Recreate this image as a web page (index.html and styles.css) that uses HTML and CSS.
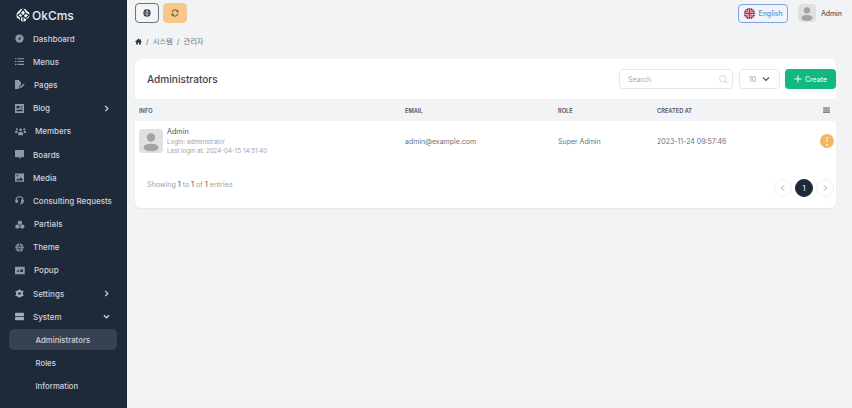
FILE: index.html
```html
<!DOCTYPE html>
<html lang="en">
<head>
<meta charset="utf-8">
<title>Administrators</title>
<link rel="stylesheet" href="styles.css">
</head>
<body>
<div class="app">
<aside class="sidebar">
  <div class="brand">
    <svg class="logo" viewBox="0 0 16 16"><path fill="#fff" d="M8 .5 11 1.500 12.500 3.500 15 5 15.500 8 14.500 11 12 12.500 10.500 15 7.500 15.500 5 14.500 3.500 12.500 1 11 .5 8 1.500 5 3.500 3.500 5 1.500Z"/><path stroke="#1e2939" stroke-width="1.300" fill="none" d="M8 1 5 6 8 9 11 6ZM5 6 2 8 5 11 8 9M8 9 8 15M11 6 15 8 11 12 8 9M5 11 5 15"/></svg>
    <span>OkCms</span>
  </div>
  <nav class="menu">
    <a class="item"><span class="ico w12"><svg viewBox="0 0 12 12"><circle cx="6" cy="6" r="5.500" fill="#8f98a5"/><path d="M8.500 2.800 6.800 7 5 6Z" fill="#1e2939"/><circle cx="5.700" cy="6.700" r="1.200" fill="#1e2939"/></svg></span><span class="lbl">Dashboard</span></a>
    <a class="item"><span class="ico w12"><svg viewBox="0 0 12 12" fill="#8f98a5"><path d="M0 1.500h2v1.400H0zM3.500 1.500H12v1.400H3.500zM0 5.300h2v1.400H0zM3.500 5.300H12v1.400H3.500zM0 9.100h2v1.400H0zM3.500 9.100H12v1.400H3.500z"/></svg></span><span class="lbl">Menus</span></a>
    <a class="item"><span class="ico w13"><svg viewBox="0 0 13 12" fill="#8f98a5"><path d="M0 0h5l3 3v2.500L5.500 9 5 12H0z"/><path d="M6.500 9 11.500 5 13 6.300 8 10.500 6 11z"/></svg></span><span class="lbl">Pages</span></a>
    <a class="item"><span class="ico w12"><svg viewBox="0 0 12 12" fill="#8f98a5"><path fill-rule="evenodd" d="M0 0h12v12H0zM2 2.500v3h4v-3zM7.500 2.500v1h2.500v-1zM7.500 5v1h2.500V5zM2 7.500V9.500h8V7.500z"/></svg></span><span class="lbl">Blog</span><svg class="chev" viewBox="0 0 8 8"><path d="M2.500 1 5.500 4 2.500 7" fill="none" stroke="#cbd2db" stroke-width="1.500"/></svg></a>
    <a class="item"><span class="ico w15"><svg viewBox="0 0 15 12" fill="#8f98a5"><circle cx="7.500" cy="3.800" r="1.900"/><circle cx="2.600" cy="3" r="1.400"/><circle cx="12.400" cy="3" r="1.400"/><path d="M4.300 11V8.500Q4.300 6.500 6 6.500H9Q10.700 6.500 10.700 8.500V11zM0 8V6.500Q0 5 1.500 5H3.500L3.300 8zM15 8V6.500Q15 5 13.500 5H11.500L11.700 8z"/></svg></span><span class="lbl">Members</span></a>
    <a class="item"><span class="ico w12"><svg viewBox="0 0 12 12" fill="#8f98a5"><path d="M1 0h10q1 0 1 1v7.500q0 1-1 1H8L5.500 12V9.500H1q-1 0-1-1V1q0-1 1-1z"/></svg></span><span class="lbl">Boards</span></a>
    <a class="item"><span class="ico w12"><svg viewBox="0 0 12 12" fill="#8f98a5"><path fill-rule="evenodd" d="M0 .5h12v11H0zM1.500 10h9L8 5.500 5.500 8.500 4 7z"/><circle cx="3.200" cy="3.400" r="1.100" fill="#1e2939"/></svg></span><span class="lbl">Media</span></a>
    <a class="item"><span class="ico w12"><svg viewBox="0 0 12 12" fill="none" stroke="#8f98a5" stroke-width="1.500"><path d="M1.500 7V5.500a4.500 4.500 0 0 1 9 0V7q0 3-3.500 3.500"/><rect x=".5" y="4.500" width="3.500" height="4.500" rx="1" fill="#8f98a5" stroke="none"/><rect x="8" y="4.500" width="3.500" height="4.500" rx="1" fill="#8f98a5" stroke="none"/></svg></span><span class="lbl">Consulting Requests</span></a>
    <a class="item"><span class="ico w13"><svg viewBox="0 0 13 12" fill="#8f98a5"><path d="M6.500.5 9.300 2v3L6.500 6.500 3.700 5V2zM3.300 5.700 6 7.200v3L3.300 11.700.5 10.200v-3zM9.700 5.700 12.500 7.200v3L9.700 11.700 7 10.200v-3z"/></svg></span><span class="lbl">Partials</span></a>
    <a class="item"><span class="ico w12"><svg viewBox="0 0 12 12"><circle cx="6" cy="6" r="5.500" fill="#8f98a5"/><path d="M.5 4.200h11M.5 7.800h11M6 .5Q3 6 6 11.500Q9 6 6 .5" fill="none" stroke="#1e2939" stroke-width=".8"/></svg></span><span class="lbl">Theme</span></a>
    <a class="item"><span class="ico w13"><svg viewBox="0 0 13 12" fill="#8f98a5"><path fill-rule="evenodd" d="M0 1h13v10H0zM2.500 8 4 4.500 5.500 8zM7 4.500V8h3.500V4.500z"/></svg></span><span class="lbl">Popup</span></a>
    <a class="item"><span class="ico w12"><svg viewBox="0 0 12 12"><circle cx="6" cy="6" r="3.500" fill="none" stroke="#a5adb9" stroke-width="2.400"/><path d="M6 .5v11M.7 3l10.600 6M.7 9l10.600-6" stroke="#a5adb9" stroke-width="1.800"/><circle cx="6" cy="6" r="1.700" fill="#1e2939"/></svg></span><span class="lbl">Settings</span><svg class="chev" viewBox="0 0 8 8"><path d="M2.500 1 5.500 4 2.500 7" fill="none" stroke="#cbd2db" stroke-width="1.500"/></svg></a>
    <a class="item"><span class="ico w12"><svg viewBox="0 0 12 12" fill="#a5adb9"><rect y="1" width="12" height="4.500" rx="1"/><rect y="6.500" width="12" height="4.500" rx="1"/></svg></span><span class="lbl">System</span><svg class="chev" viewBox="0 0 8 8"><path d="M1 2.500 4 5.500 7 2.500" fill="none" stroke="#cbd2db" stroke-width="1.500"/></svg></a>
    <a class="sub active">Administrators</a>
    <a class="sub">Roles</a>
    <a class="sub">Information</a>
  </nav>
</aside>
<div class="main">
  <header class="topbar">
    <div class="tools">
      <button class="tool outline"><svg viewBox="0 0 12 12"><circle cx="6" cy="6" r="5.500" fill="#1e2939"/><path d="M.5 4.300h11M.5 7.700h11M6 .5Q3.500 6 6 11.500Q8.500 6 6 .5" fill="none" stroke="#fff" stroke-width=".7"/></svg></button>
      <button class="tool orange"><svg viewBox="0 0 12 12" fill="none" stroke="#4a4032" stroke-width="1.400"><path d="M1.500 5a4.500 4.500 0 0 1 8-2l1 1M10.500 7a4.500 4.500 0 0 1-8 2l-1-1"/><path d="M10.500 1V4.500H7.500M1.500 11V7.500H4.500" stroke-width="1"/></svg></button>
    </div>
    <div class="account">
      <button class="lang">
        <svg class="flag" viewBox="0 0 14 14"><clipPath id="fc"><circle cx="7" cy="7" r="7"/></clipPath><g clip-path="url(#fc)"><rect width="14" height="14" fill="#27408b"/><path d="M0 0 14 14M14 0 0 14" stroke="#d9dce8" stroke-width="2"/><path d="M0 0 14 14M14 0 0 14" stroke="#d1344a" stroke-width="1"/><path d="M7 0V14M0 7H14" stroke="#e8e9ee" stroke-width="3.500"/><path d="M7 0V14M0 7H14" stroke="#cf2a44" stroke-width="2.200"/></g></svg>
        <span>English</span>
      </button>
      <span class="avatar small"><svg viewBox="0 0 24 24" fill="#a3a3a3"><circle cx="12" cy="8.500" r="4.200"/><ellipse cx="12" cy="18.500" rx="7.500" ry="3.800"/></svg></span>
      <span class="account-name">Admin</span>
    </div>
  </header>
  <div class="crumbs">
    <svg class="home" viewBox="0 0 12 12" fill="#2d3748"><path d="M6 1 0 6.300l.7.8L2 6v5h3V8h2v3h3V6l1.300 1.100.7-.8L10 4.600V2H8.500v1.300z"/></svg>
    <span class="sep">/</span><span>시스템</span><span class="sep">/</span><span>관리자</span>
  </div>
  <section class="card">
    <div class="card-head">
      <h1>Administrators</h1>
      <div class="controls">
        <label class="search"><span>Search</span><svg viewBox="0 0 12 12" fill="none" stroke="#c9cdd3"><circle cx="5" cy="5" r="4.200"/><path d="M8 8l3 3" stroke-width="1.300"/></svg></label>
        <div class="size"><span>10</span><svg viewBox="0 0 8 8"><path d="M1 2.500 4 5.500 7 2.500" fill="none" stroke="#4b5563" stroke-width="1.200"/></svg></div>
        <button class="create"><svg viewBox="0 0 10 10"><path d="M5 .5v9M.5 5h9" stroke="#fff" stroke-width="1.200"/></svg>Create</button>
      </div>
    </div>
    <div class="row thead">
      <div class="c-info">INFO</div><div class="c-email">EMAIL</div><div class="c-role">ROLE</div><div class="c-date">CREATED AT</div>
      <div class="c-act"><svg class="bars" viewBox="0 0 9 8" fill="#4b5563"><path d="M0 .5h9v1.400H0zM0 3.300h9v1.400H0zM0 6.100h9v1.400H0z"/></svg></div>
    </div>
    <div class="row tbody">
      <div class="c-info user">
        <span class="avatar"><svg viewBox="0 0 24 24" fill="#a3a3a3"><circle cx="12" cy="8.500" r="4.200"/><ellipse cx="12" cy="18.500" rx="7.500" ry="3.800"/></svg></span>
        <div class="meta"><div class="name">Admin</div><div class="fine">Login: administrator</div><div class="fine">Last login at: 2024-04-15 14:51:40</div></div>
      </div>
      <div class="c-email">admin@example.com</div>
      <div class="c-role">Super Admin</div>
      <div class="c-date">2023-11-24 09:57:46</div>
      <div class="c-act"><span class="dots"><i></i><i></i><i></i></span></div>
    </div>
    <div class="card-foot">
      <div class="entries">Showing <b>1</b> to <b>1</b> of <b>1</b> entries</div>
      <div class="pager">
        <span class="pg"><svg viewBox="0 0 8 8"><path d="M5 1.500 2.500 4 5 6.500" fill="none" stroke="#9ca3af"/></svg></span>
        <span class="pg current">1</span>
        <span class="pg"><svg viewBox="0 0 8 8"><path d="M3 1.500 5.500 4 3 6.500" fill="none" stroke="#9ca3af"/></svg></span>
      </div>
    </div>
  </section>
</div>
</div>
</body>
</html>
```
FILE: styles.css
```css
* { box-sizing: border-box; }
html, body { margin: 0; height: 100%; }
body { font-family: Inter, "Noto Sans CJK KR", sans-serif; background: #f2f3f5; color: #374151; overflow: hidden; }
button { font-family: inherit; padding: 0; cursor: pointer; }
.app { display: flex; height: 408px; }
.sidebar { width: 127px; flex: none; background: #1e2939; color: #ced3da; overflow: hidden; }
.brand { display: flex; align-items: center; gap: 2px; height: 27px; padding: 3px 0 0 16px; color: #e8ebef; font-size: 12px; font-weight: 500; }
.logo { width: 14px; height: 14px; }
.menu { display: flex; flex-direction: column; }
.item { display: flex; align-items: center; height: 23.200px; padding-left: 15px; font-size: 8px; font-weight: 500; }
.ico { display: flex; flex: none; margin-right: 6px; }
.ico svg { height: 9px; }
.w12 { width: 12px; }
.w13 { width: 13px; }
.w15 { width: 14px; }
.lbl { white-space: nowrap; }
.chev { width: 7px; height: 7px; position: absolute; left: 102.500px; }
.sub { display: flex; align-items: center; height: 21px; margin: 1px 10px 1.200px 9px; padding-left: 26.500px; border-radius: 5px; font-size: 7.800px; font-weight: 500; }
.active { background: #374151; }
.main { flex: 1; min-width: 0; padding: 3px 16px 0 8px; }
.topbar { display: flex; justify-content: space-between; align-items: center; height: 20px; }
.tools { display: flex; gap: 4px; }
.tool { width: 24px; height: 20px; display: flex; align-items: center; justify-content: center; border-radius: 4px; background: transparent; border: 1px solid #6b7280; }
.tool svg { width: 8px; height: 8px; }
.orange { background: #f6c88a; border-color: #f6c88a; }
.account { display: flex; align-items: center; margin-right: -6px; }
.lang { display: flex; align-items: center; gap: 3px; height: 19px; width: 50px; padding-left: 5px; background: #f1f4fb; border: 1px solid #7fa2e0; border-radius: 4px; font-size: 7px; font-weight: 500; color: #6f8fdc; }
.flag { width: 11px; height: 11px; }
.avatar { display: flex; background: #e0e0e0; border-radius: 4px; width: 24px; height: 24px; flex: none; }
.avatar.small { width: 18px; height: 18px; margin-left: 9.500px; }
.avatar svg { width: 100%; height: 100%; }
.account-name { margin-left: 5px; font-size: 6.900px; font-weight: 500; color: #55585f; }
.crumbs { display: flex; align-items: center; gap: 4px; height: 14px; margin-top: 11px; font-size: 7.300px; color: #6f7177; }
.home { width: 7px; height: 7px; }
.card { margin-top: 11px; background: #fff; border-radius: 6px; box-shadow: 0 1px 2px rgba(0,0,0,.06); height: 149px; }
.card-head { display: flex; justify-content: space-between; align-items: center; height: 40px; padding-left: 12px; }
h1 { margin: 0; font-size: 10.100px; font-weight: 500; color: #3f4249; }
.controls { display: flex; gap: 6px; align-items: center; }
.search { display: flex; justify-content: space-between; align-items: center; width: 114px; height: 20px; padding: 0 4px 0 8px; border: 1px solid #e5e7eb; border-radius: 4px; font-size: 7px; color: #a9abb0; }
.search svg { width: 9px; height: 9px; }
.size { display: flex; justify-content: space-between; align-items: center; width: 41px; height: 20px; padding: 0 9px; border: 1px solid #e5e7eb; border-radius: 4px; font-size: 7px; color: #a0a2a8; }
.size svg { width: 8px; height: 8px; }
.create { display: flex; align-items: center; justify-content: center; gap: 3px; width: 51px; height: 20px; margin-left: -1px; background: #10b981; border: 0; border-radius: 4px; color: #e5f7f0; font-size: 6.900px; font-weight: 500; }
.create svg { width: 8px; height: 8px; }
.row { display: flex; align-items: center; }
.thead { height: 22px; background: #f2f3f5; font-size: 5.700px; font-weight: 600; color: #505258; }
.tbody { height: 40px; font-size: 7px; color: #6e7076; }
.c-info { width: 270px; padding-left: 4px; flex: none; }
.c-email { width: 153px; flex: none; }
.c-role { width: 99px; flex: none; }
.c-date { width: 140px; flex: none; }
.c-act { flex: 1; display: flex; justify-content: flex-end; padding-right: 2.500px; }
.bars { width: 7px; height: 6px; margin-right: 3.500px; }
.user { display: flex; gap: 4px; align-items: center; }
.meta { display: flex; flex-direction: column; gap: 1px; }
.name { font-size: 7.200px; color: #505258; line-height: 10px; }
.fine { font-size: 6.200px; color: #a0a2a8; line-height: 8.500px; }
.dots { display: flex; flex-direction: column; align-items: center; justify-content: center; gap: 1.500px; width: 14px; height: 14px; border-radius: 50%; background: #f3b55f; }
.dots i { width: 2px; height: 2px; background: #fdf3e2; border-radius: 50%; }
.card-foot { display: flex; justify-content: space-between; align-items: center; height: 47px; padding: 0 2px 0 12px; }
.entries { font-size: 7.050px; color: #a0a2a8; }
.entries b { font-weight: 500; color: #6e7076; }
.pager { display: flex; gap: 3px; margin-top: 7px; }
.pg { display: flex; align-items: center; justify-content: center; width: 18px; height: 18px; border: 1px solid #eceef1; border-radius: 50%; }
.pg svg { width: 8px; height: 8px; }
.current { background: #1e2939; border-color: #1e2939; color: #d6dbe2; font-size: 7px; font-weight: 600; }
```
